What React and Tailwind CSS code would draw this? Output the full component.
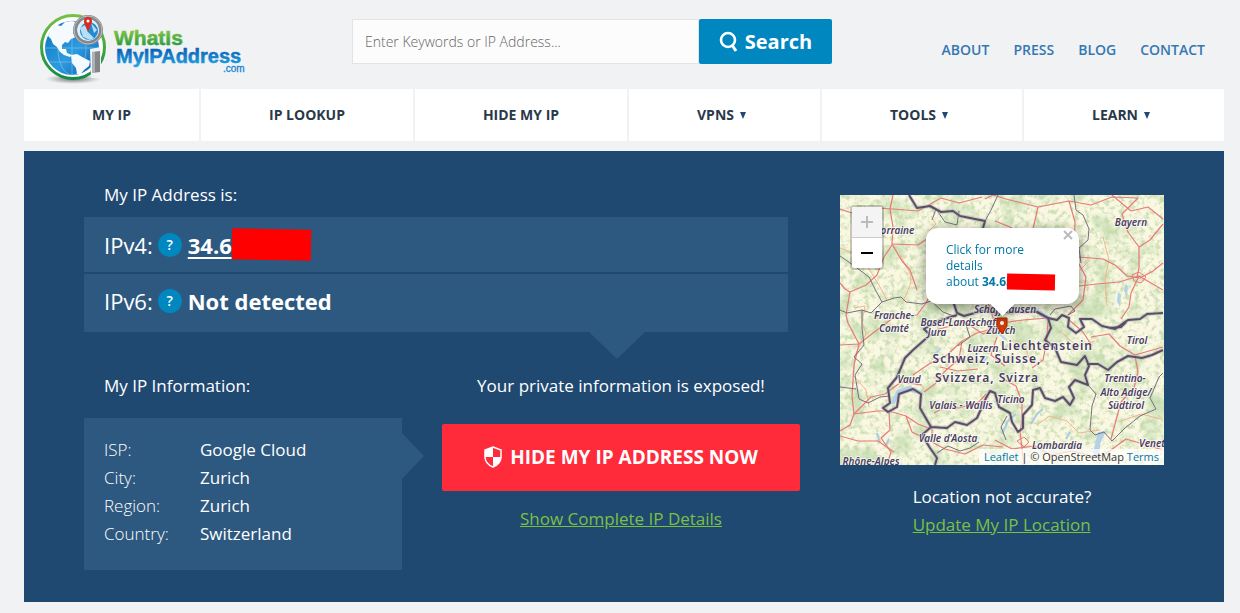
const topLinks = ["About", "Press", "Blog", "Contact"];

const menu = [
  { label: "My IP" },
  { label: "IP Lookup" },
  { label: "Hide My IP" },
  { label: "VPNs", sub: true },
  { label: "Tools", sub: true },
  { label: "Learn", sub: true },
];

const info = [
  ["ISP:", "Google Cloud"],
  ["City:", "Zurich"],
  ["Region:", "Zurich"],
  ["Country:", "Switzerland"],
];

/* Region names: x, y, text */
const regions = [
  [55, 39, "Lorraine"],
  [291, 31, "Bayern"],
  [54, 124, "Franche-"],
  [54, 137, "Comté"],
  [165, 118, "Schaffhausen"],
  [120, 131, "Basel-Landschaft"],
  [97, 141, "Jura"],
  [161, 139, "Zürich"],
  [143, 157, "Luzern"],
  [69, 188, "Vaud"],
  [121, 214, "Valais - Wallis"],
  [171, 208, "Ticino"],
  [297, 149, "Tirol"],
  [285, 187, "Trentino-"],
  [286, 201, "Alto Adige/"],
  [286, 214, "Südtirol"],
  [108, 247, "Valle d'Aosta"],
  [217, 254, "Lombardia"],
  [315, 252, "Veneto"],
  [31, 270, "Rhône-Alpes"],
];

const countries = [
  [207, 155, "Liechtenstein"],
  [147, 168, "Schweiz, Suisse,"],
  [147, 187, "Svizzera, Svizra"],
];

const roads = [
  "M53 0 L50 14 L53 32 L52 49 L62 66 L70 75 L77 95",
  "M0 14 L18 20 L36 13 L53 14 L78 16 L101 3 L119 8 L142 2",
  "M52 49 L78 50 L97 37 L112 47",
  "M52 50 L44 62 L37 80 L26 90 L10 97 L5 94 L0 88",
  "M10 97 L6 120 L8 128 L19 149 L14 170 L12 201 L14 219 L10 230 L0 236",
  "M0 150 L19 149 L33 138 L53 123 L77 120 L86 108 L91 98",
  "M145 4 L153 0 L166 4 L198 12 L229 6 L251 10 L272 2 L298 3",
  "M198 12 L193 34 M155 26 L170 32 L187 42",
  "M229 6 L235 27 L234 60 L246 82 L243 105 L228 120",
  "M239 62 L263 64 L275 70 L287 81 L300 83 L313 76 L323 68",
  "M298 3 L282 19 L288 37 L299 52 L299 73 L297 82",
  "M272 0 L291 16 L308 12 L323 24 M323 29 L310 45 L299 52",
  "M239 91 L257 89 L279 87 L299 81 L323 95",
  "M299 81 L291 98 L289 112 L281 124",
  "M162 128 L183 125 L208 123 L207 145 L203 165 L192 173",
  "M95 135 L111 131 L125 127 L143 139 L160 132",
  "M73 180 L89 169 L107 160 L122 146 L137 138 L160 132",
  "M122 146 L119 164 L104 177 L95 189 L84 197",
  "M100 172 L118 176 L138 174 M157 142 L151 160 L165 171",
  "M13 219 L38 216 L49 216 L66 221 L78 229 L91 234",
  "M14 219 L31 202 L45 199 L61 187 L82 190",
  "M49 217 L50 235 L41 243 L51 257 L47 270",
  "M0 241 L18 246 L38 246 L54 257 M66 221 L72 237 L86 244",
  "M92 232 L92 247 L105 254 L125 259 L143 250 L163 252",
  "M163 184 L176 191 L182 207 L182 225 L180 237 L184 270",
  "M155 245 L172 254 L195 251 L211 260 L232 256 L260 263 L286 244 L323 255",
  "M251 142 L269 139 L280 151 L295 160 L323 152",
  "M295 161 L298 177 L294 193 L281 207 L275 229 L271 244",
  "M228 124 L243 137 L252 151 M140 91 L150 113 L155 129",
  "M94 218 L107 211 L119 213 L139 207 L146 199",
];

const tracks = [
  "M0 53 L20 61 L31 77 L40 92 L47 105",
  "M60 60 L70 78 L71 88 L62 109 M89 36 L96 29 L91 21",
  "M14 113 L25 111 L22 127 L26 139 L15 160 L14 174",
  "M263 42 L269 65 L265 84 L267 111 M240 75 L250 65",
  "M197 230 L209 221 L227 226 L239 238 L260 235",
  "M14 181 L26 195 L29 212 M281 226 L301 219 L321 224",
  "M176 145 L185 152 L191 168 M220 136 L237 151 L255 146",
];

const thinBorders = [
  "M0 61 L13 70 L29 82 L36 96 L42 107 L54 103 L61 102 L66 107 L82 109 L91 106 L103 117 L116 122",
  "M42 107 L31 118 L22 115 L7 118 L0 115 M22 115 L22 133 L24 150 L14 162 L22 169 L15 180 L19 204 L28 208 L40 202 L50 201",
  "M0 192 L16 194 M97 258 L108 251 L120 256 L130 253 L139 247",
  "M92 25 L96 14 L105 27 L117 30 L119 16 M145 26 L151 15 L158 0",
  "M234 0 L236 15 L243 20 L249 34 L248 45 L239 53 L241 68",
  "M228 120 L235 116 L231 111 L215 114 L210 120",
  "M248 190 L256 199 L252 211 L250 235 L255 240 L264 237 L272 246 L285 233 L300 221 L316 214 L310 203 L319 182 L323 178",
  "M125 127 L130 142 L118 151 M167 221 L161 232 L166 245",
];

const borders = [
  "M69 0 L77 13 L90 11 L101 17 L113 16 L120 21 L145 26 L143 33 L137 51 L124 76 L116 91 L114 109 L117 118 L124 121 L142 116 L158 118 L177 117 L197 117 L208 123 L211 133 L205 145 L215 153 L221 167 L237 170 L245 161 L249 171 L245 180 L248 190 L235 185 L229 192 L234 203 L230 210 L223 202 L215 206 L205 203 L200 193 L193 195 L192 210 L183 220 L183 233 L178 237 L172 227 L170 218 L159 212 L155 198 L150 196 L146 203 L137 223 L127 230 L115 227 L107 233 L91 232 L84 220 L80 213 L81 199 L73 194 L59 199 L57 212 L48 217 L43 213 L50 208 L48 193 L57 182 L65 163 L73 155 L90 140 L84 134 L98 126 L117 120",
  "M208 123 L217 125 L222 120 L229 123 L228 132 L236 138 L244 132 L240 124 L252 124 L262 131 L275 134 L288 125 L300 124 L307 119 L323 118",
  "M247 169 L258 169 L268 175 L277 167 L288 161 L302 163 L312 160 L323 155",
  "M91 232 L82 240 L90 253 L97 263 L95 270 M270 133 L281 132 L286 127",
];

function Logo() {
  return (
    <svg viewBox="0 0 210 74" className="h-[74px] w-[210px]" role="img" aria-label="WhatIsMyIPAddress.com">
      <defs>
        <linearGradient id="ring" x1="0" y1="0" x2="0" y2="1">
          <stop offset="0" stopColor="#77c043" />
          <stop offset="1" stopColor="#118c45" />
        </linearGradient>
        <linearGradient id="ocean" x1="0" y1="0" x2="1" y2="1">
          <stop offset="0" stopColor="#0873bc" />
          <stop offset=".55" stopColor="#2d9be0" />
          <stop offset="1" stopColor="#075ba8" />
        </linearGradient>
        <linearGradient id="what" x1="0" y1="0" x2="0" y2="1">
          <stop offset=".2" stopColor="#82c341" />
          <stop offset="1" stopColor="#169447" />
        </linearGradient>
        <linearGradient id="address" x1="0" y1="0" x2="0" y2="1">
          <stop offset=".2" stopColor="#0b62b5" />
          <stop offset="1" stopColor="#22a7e8" />
        </linearGradient>
        <radialGradient id="shade">
          <stop offset="0" stopColor="#444" stopOpacity=".8" />
          <stop offset="1" stopColor="#777" stopOpacity="0" />
        </radialGradient>
      </defs>
      <ellipse cx="33" cy="67" rx="28" ry="5" fill="url(#shade)" />
      <circle cx="33" cy="35" r="31.5" fill="#fff" stroke="url(#ring)" strokeWidth="3" />
      <circle cx="32" cy="36" r="27" fill="url(#ocean)" />
      <g fill="none" stroke="#86c6ee" strokeWidth=".6">
        <ellipse cx="32" cy="36" rx="14" ry="27" />
        <path d="M5 36h54M9 23h46M9 50h46M32 9v54" />
      </g>
      {/* Continents */}
      <path fill="#f5fafe" d="M8 24 11 18 17 13 21 14 25 10 32 9 37 11 34 14 36 18 33 21 36 25 31 27 28 31 25 30 22 33 22 37 26 37 27 41 32 43 30 45 24 43 20 40 17 35 13 32 11 27Z" />
      <path fill="#f5fafe" d="M31 43 37 42 44 46 50 49 49 54 44 58 41 62 37 62 36 56 32 51Z" />
      {/* Magnifier */}
      <path fill="#f1f2f4" d="M50 37 61 35V66H51Z" />
      <path fill="#85868a" d="M52 40 60 39V60L52 61Z" />
      <path fill="#b0b1b4" d="M52 40 55 40V61H52Z" />
      <circle cx="48" cy="18" r="11" fill="#dff0fa" />
      <circle cx="49" cy="19" r="9" fill="#2389d0" />
      <path d="M40 16 45 13 48 20 54 26 50 28 43 25M51 11l6 7-3 3" fill="#b9dff6" />
      <circle cx="48" cy="18" r="13" fill="none" stroke="#85878b" strokeWidth="4" />
      <circle cx="48" cy="18" r="14" fill="none" stroke="#bfc0c3" strokeWidth="1" />
      <path fill="#d92b20" d="M48 20C46 14 44 12 44 9a4 4 0 0 1 8 0C52 12 50 14 48 20Z" />
      <circle cx="48" cy="9" r="1.5" fill="#fff" />
      <g fontFamily="Liberation Sans, Arial, sans-serif">
        <g strokeWidth=".5">
          <text x="74" y="33" fontSize="21" fill="url(#what)" stroke="url(#what)" fontWeight="700">WhatIs</text>
          <text x="76" y="51" fontSize="20" fill="url(#address)" stroke="url(#address)" fontWeight="700">MyIPAddress</text>
        </g>
        <text x="183" y="60" fontSize="10" fill="#1686d4" stroke="#1686d4" strokeWidth=".3">.com</text>
      </g>
    </svg>
  );
}

function MapDrawing() {
  return (
    <svg viewBox="0 0 324 270" preserveAspectRatio="xMidYMid slice" className="block h-full w-full" role="img" aria-label="Map of Switzerland">
      <defs>
        <filter id="forest" x="0" y="0" width="100%" height="100%" colorInterpolationFilters="sRGB">
          <feTurbulence type="fractalNoise" baseFrequency=".2" numOctaves="5" seed="8" />
          <feColorMatrix values="0 0 0 0 .74  0 0 0 0 .84  0 0 0 0 .64  4 0 0 0 -1.9" />
        </filter>
        <filter id="fields" x="0" y="0" width="100%" height="100%" colorInterpolationFilters="sRGB">
          <feTurbulence type="fractalNoise" baseFrequency=".04" numOctaves="5" seed="21" />
          <feColorMatrix values="0 0 0 0 .82  0 0 0 0 .89  0 0 0 0 .74  0 4 0 0 -1.9" />
        </filter>
      </defs>
      <rect width="324" height="270" fill="#faf8e2" />
      <rect width="324" height="270" filter="url(#fields)" />
      <rect width="324" height="270" filter="url(#forest)" opacity=".7" />

      {/* Lakes */}
      <g fill="#b3d1e9">
        <path d="M51 208 57 195 68 191 76 193 85 200 78 199 69 196 59 200 54 210Z" />
        <path d="M192 114 201 116 213 124 209 127 201 122Z" />
        <path d="M253 258 258 237 266 236 260 249 259 265Z" />
        <path d="M278 97 281 100 280 112 277 106ZM285 89l3 2-1 10-3-5Z" />
        <path d="M94 158 101 152 101 154 96 161ZM158 137l8 6 2 4-9-7ZM141 160l8 2-5 5Z" />
      </g>
      <g fill="none" stroke="#a9cae6" strokeWidth="2">
        <path d="M162 239 168 226 176 219M191 229 197 219 203 214M226 244 230 237M46 250 49 244M37 238 40 247" />
      </g>

      <g fill="none" strokeLinejoin="round">
        {tracks.map((d) => (
          <path key={d} d={d} stroke="#f4b58b" strokeWidth="1" />
        ))}
        {roads.map((d) => (
          <path key={d} d={d} stroke="#e87a78" strokeWidth="1.2" />
        ))}
        <path d="M292 80 299 77 306 82 301 88 294 86ZM177 246l7-4 5 5-5 5Z" stroke="#e87a78" strokeWidth="1" />
        {thinBorders.map((d) => (
          <path key={d} d={d} stroke="#77717f" strokeWidth="1" />
        ))}
        {borders.map((d) => (
          <path key={d} d={d} stroke="#b5a8b8" strokeWidth="4" opacity=".5" />
        ))}
        {borders.map((d) => (
          <path key={d} d={d} stroke="#585066" strokeWidth="2" />
        ))}
      </g>

      <g
        fontFamily="Noto Sans, Open Sans, sans-serif"
        textAnchor="middle"
        fill="#4b3d61"
        stroke="#fff"
        strokeOpacity=".65"
        strokeWidth="2"
        strokeLinejoin="round"
        style={{ paintOrder: "stroke" }}
      >
        <g fontSize="10" fontStyle="italic" fontWeight="600">
          {regions.map(([x, y, name]) => (
            <text key={name} x={x} y={y}>{name}</text>
          ))}
        </g>
        <g fontSize="12" fontWeight="600" letterSpacing="1">
          {countries.map(([x, y, name]) => (
            <text key={name} x={x} y={y}>{name}</text>
          ))}
        </g>
      </g>

      {/* Marker */}
      <path d="M157 123h10v8l-5 8-5-8Z" fill="#d33b08" stroke="#a72800" strokeWidth="1" />
      <circle cx="162" cy="128" r="2" fill="#fff" />
    </svg>
  );
}

function LocationMap() {
  return (
    <div className="relative mt-3.5 h-[270px] overflow-hidden">
      <MapDrawing />

      <div className="absolute top-2.5 left-2.5 flex flex-col rounded-sm border-2 border-black/20 bg-white bg-clip-padding text-black">
        <button type="button" aria-label="Zoom in" disabled className="flex h-[31px] w-[30px] items-center justify-center border-b border-[#ccc] bg-[#f4f4f4] text-[#bbb]">
          <svg viewBox="0 0 14 14" className="size-3.5"><path d="M7 1v12M1 7h12" stroke="currentColor" strokeWidth="2" /></svg>
        </button>
        <button type="button" aria-label="Zoom out" className="flex h-[30px] w-[30px] items-center justify-center">
          <svg viewBox="0 0 14 14" className="size-3.5"><path d="M1 7h12" stroke="currentColor" strokeWidth="2" /></svg>
        </button>
      </div>

      {/* Popup */}
      <div className="absolute top-[33px] left-[86px] w-[153px] drop-shadow-[0_3px_6px_rgba(0,0,0,0.4)]">
        <div className="relative h-[76px] rounded-xl bg-white px-5 pt-3.5 text-xs leading-4 text-[#0078a8]">
          <a href="#details" className="block">
            Click for more
            <br />
            details
            <br />
            <span className="flex items-center whitespace-pre">
              about <b>34.65</b>
              <span className="z-10 -ml-1.5 h-4 w-12 rotate-1 bg-[#ff0000]" />
            </span>
          </a>
          <button type="button" aria-label="Close popup" className="absolute top-0.5 right-1.5 text-[#bbb]">
            <svg viewBox="0 0 10 10" className="size-2.5"><path d="m1 1 8 8M9 1 1 9" stroke="currentColor" strokeWidth="2" /></svg>
          </button>
        </div>
        <div className="mx-auto h-3 w-6 bg-white [clip-path:polygon(0_0,100%_0,50%_100%)]" />
      </div>

      <div className="absolute right-0 bottom-0 bg-white/70 px-[5px] text-[11px] leading-4 text-[#333]">
        <a href="#leaflet" className="text-[#0078a8]">Leaflet</a> | © OpenStreetMap{" "}
        <a href="#terms" className="text-[#0078a8]">Terms</a>
      </div>
    </div>
  );
}

function HelpButton({ label }) {
  return (
    <button type="button" aria-label={label} className="mr-1.5 ml-[5px] flex size-6 items-center justify-center rounded-full bg-[#0087bf] text-sm font-semibold">
      ?
    </button>
  );
}

export default function App() {
  return (
    <div className="min-h-screen bg-[#f1f2f4] pr-4 pb-[11px] pl-6 font-['Open_Sans',sans-serif]">
      {/* Header */}
      <header className="flex h-[89px] items-start pr-[19px] pl-4">
        <a href="#home" className="mt-3 mr-[102px] shrink-0">
          <Logo />
        </a>
        <form className="mt-[19px] flex h-[45px] w-[480px]" onSubmit={(e) => e.preventDefault()}>
          <input
            type="text"
            aria-label="Search"
            placeholder="Enter Keywords or IP Address..."
            className="min-w-0 flex-1 border border-[#e3e4e6] bg-[#fcfcfc] px-3 text-sm font-light text-[#555] outline-none placeholder:text-[#666]"
          />
          <button type="submit" className="flex w-[133px] items-center justify-center gap-1.5 rounded-xs bg-[#0087bf] text-xl font-bold text-white">
            <svg viewBox="0 0 20 22" className="h-[22px] w-5" fill="none" stroke="currentColor">
              <circle cx="9" cy="9" r="7" strokeWidth="2.6" />
              <path d="m13 14 4 6" strokeWidth="3" />
            </svg>
            Search
          </button>
        </form>
        <nav className="mt-10 ml-auto flex gap-6 text-sm leading-5 font-semibold text-[#3578b0] uppercase">
          {topLinks.map((name) => (
            <a key={name} href={`#${name.toLowerCase()}`}>{name}</a>
          ))}
        </nav>
      </header>

      {/* Main menu */}
      <nav className="grid h-[52px] grid-cols-[175fr_212fr_212fr_191fr_200fr_200fr] gap-0.5 text-sm font-bold text-[#29394a] uppercase">
        {menu.map(({ label, sub }) => (
          <a key={label} href="#menu" className="flex items-center justify-center bg-white">
            {label}
            {sub && <svg viewBox="0 0 6 7" className="mr-1.5 ml-1.5 h-[7px] w-1.5"><path d="M0 0h6L3 7z" fill="#204972" /></svg>}
          </a>
        ))}
      </nav>

      <main className="mt-2.5 flex gap-10 bg-[#204972] px-[60px] pt-[30px] pb-8 text-[17px] leading-7 text-white">
        <div className="flex-1">
          {/* Addresses */}
          <h1 className="pl-5">My IP Address is:</h1>
          <div className="mt-2 mr-3 flex flex-col gap-0.5 text-[22px]">
            <div className="flex h-[55px] items-center bg-[#2d587f] px-5">
              IPv4:
              <HelpButton label="What is IPv4?" />
              <a href="#ipv4" className="font-bold underline underline-offset-3">34.6</a>
              <span className="h-[31px] w-[79px] rotate-1 bg-[#ff0000]" />
            </div>
            <div className="relative flex h-[58px] items-center bg-[#2d587f] px-5 pb-1">
              IPv6:
              <HelpButton label="What is IPv6?" />
              <span className="font-bold">Not detected</span>
              <span className="absolute top-full right-[143px] h-[27px] w-14 bg-[#2d587f] [clip-path:polygon(0_0,100%_0,50%_100%)]" />
            </div>
          </div>

          <div className="mt-10 flex gap-10">
            <section className="w-[318px]">
              <h2 className="pl-5">My IP Information:</h2>
              <div className="relative mt-[18px] bg-[#2d587f] px-5 pt-[18px] pb-[22px]">
                <dl className="grid grid-cols-[96px_1fr]">
                  {info.map(([term, value]) => (
                    <div key={term} className="contents">
                      <dt className="font-light">{term}</dt>
                      <dd className="font-medium">{value}</dd>
                    </div>
                  ))}
                </dl>
                <span className="absolute top-[15px] left-full h-[46px] w-[22px] bg-[#2d587f] [clip-path:polygon(0_0,100%_50%,0_100%)]" />
              </div>
            </section>

            <section className="flex flex-1 flex-col items-center">
              <h2>Your private information is exposed!</h2>
              <button type="button" className="mt-6 flex h-[67px] w-full items-center justify-center gap-2 rounded-xs bg-[#ff2a3a] pb-0.5 text-[19px] font-bold">
                <svg viewBox="0 0 18 22" className="h-[22px] w-[18px]">
                  <path d="M9 1 17 4v7c0 5-3 8-8 10-5-2-8-5-8-10V4Z" fill="none" stroke="currentColor" strokeWidth="1.5" />
                  <path d="M9 1 1 4v7h8ZM9 11h8c0 5-3 8-8 10Z" fill="currentColor" />
                </svg>
                HIDE MY IP ADDRESS NOW
              </button>
              <a href="#details" className="mt-3.5 text-[#7ac143] underline">Show Complete IP Details</a>
            </section>
          </div>
        </div>

        {/* Map column */}
        <aside className="w-[324px]">
          <LocationMap />
          <div className="mt-[18px] flex flex-col items-center">
            <div>
              <p>Location not accurate?</p>
              <a href="#update" className="text-[#7ac143] underline">Update My IP Location</a>
            </div>
          </div>
        </aside>
      </main>
    </div>
  );
}
